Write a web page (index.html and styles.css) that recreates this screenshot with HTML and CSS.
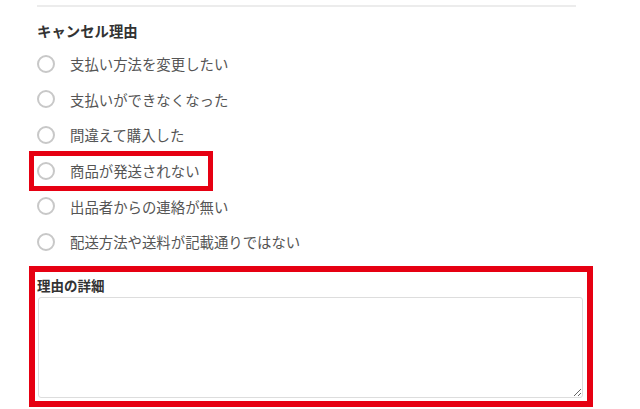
FILE: index.html
```html
<!DOCTYPE html>
<html lang="ja">

<head>
    <meta charset="UTF-8">
    <meta name="viewport" content="width=device-width, initial-scale=1.0">
    <title>キャンセル理由</title>
    <link rel="stylesheet" href="styles.css">
</head>

<body>
    <div class="page">
        <div class="rule"></div>
        <h2 class="section-title">キャンセル理由</h2>
        <div class="options">
            <label class="option"><span class="radio"></span>支払い方法を変更したい</label>
            <label class="option"><span class="radio"></span>支払いができなくなった</label>
            <label class="option"><span class="radio"></span>間違えて購入した</label>
            <label class="option"><span class="option-inner highlight"><span class="radio"></span>商品が発送されない</span></label>
            <label class="option"><span class="radio"></span>出品者からの連絡が無い</label>
            <label class="option"><span class="radio"></span>配送方法や送料が記載通りではない</label>
        </div>

        <div class="details">
            <label class="details-label" for="detail">理由の詳細</label>
            <textarea id="detail" class="details-input"></textarea>
        </div>
    </div>
</body>

</html>
```

FILE: styles.css
```css
body {
    margin: 0;
    padding: 0;
    background: #fff;
    font-family: "Noto Sans CJK JP", "Noto Sans", sans-serif;
    color: #333;
}

.page {
    width: 539px;
    margin-left: 37px;
    padding-top: 5px;
}

.rule {
    height: 2px;
    background-color: #ececec;
}

.section-title {
    margin: 14px 0 0;
    font-size: 14.4px;
    line-height: 20px;
    font-weight: bold;
    color: #333;
}

.options {
    margin-top: 5px;
}

.option {
    display: flex;
    align-items: center;
    height: 35.6px;
    font-size: 14.4px;
    color: #555;
}

.option-inner {
    display: inline-flex;
    align-items: center;
}

.radio {
    width: 18px;
    height: 18px;
    box-sizing: border-box;
    border: 2px solid #c8c8c8;
    border-radius: 50%;
    margin-left: 0;
    margin-right: 15px;
    flex-shrink: 0;
}

.highlight {
    position: relative;
}

.highlight::after {
    content: "";
    position: absolute;
    top: -9px;
    bottom: -10px;
    left: -8px;
    right: -13px;
    border: 5px solid #e60012;
}

.details {
    width: 564px;
    margin: 6px 0 0 -8px;
    box-sizing: border-box;
    border: 6px solid #e60012;
    padding: 4px 4px 3px 3px;
}

.details-label {
    display: block;
    margin-left: -1px;
    font-size: 13.5px;
    line-height: 18px;
    font-weight: bold;
    color: #333;
}

.details-input {
    display: block;
    width: 100%;
    height: 101px;
    margin-top: 3px;
    box-sizing: border-box;
    border: 1px solid #ddd;
    border-radius: 3px;
    font-family: inherit;
}
```
